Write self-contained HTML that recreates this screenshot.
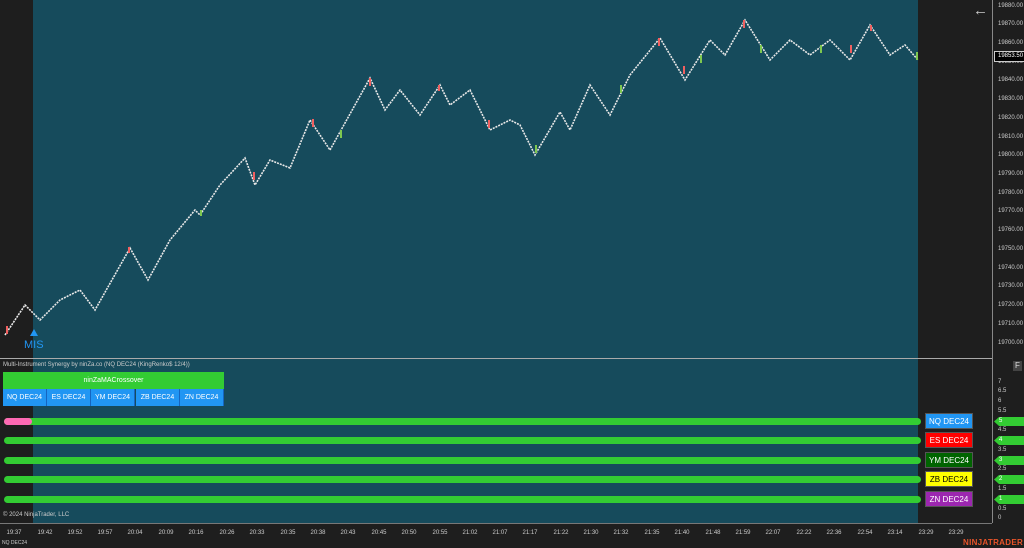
<!DOCTYPE html>
<html><head><meta charset="utf-8"><style>
body{margin:0;width:1024px;height:548px;background:#1e1e1e;position:relative;overflow:hidden;font-family:"Liberation Sans",sans-serif;color:#ddd}
.a{position:absolute}
.pl{position:absolute;left:998px;font-size:6px;color:#ccc}
.tl{position:absolute;top:530px;font-size:6px;color:#ccc;transform:translateX(-50%)}
.bar{position:absolute;left:4px;width:917px;height:7px;border-radius:4px;background:#33cc33}
.lbl{position:absolute;left:925px;width:48px;height:16px;font-size:8px;line-height:16px;text-align:center;border:1px solid #555;box-sizing:border-box}
.tag{position:absolute;left:994px;width:30px;height:9px;background:#33cc33;font-size:6px;line-height:9px;color:#fff;padding-left:5px;box-sizing:border-box;clip-path:polygon(5px 0,100% 0,100% 100%,5px 100%,0 50%)}
.btn{position:absolute;top:389px;height:17px;width:43px;background:#2196f3;color:#fff;font-size:7px;line-height:17px;text-align:center;border-right:1px solid #1565c0}
</style></head><body>
<div class="a" style="left:33px;top:0;width:885px;height:523px;background:#164b5c"></div>
<div class="a" style="left:992px;top:0;width:1px;height:523px;background:#888"></div>
<div class="a" style="left:0;top:358px;width:992px;height:1px;background:#aaa"></div>
<div class="a" style="left:0;top:523px;width:992px;height:1px;background:#777"></div>
<svg class="a" style="left:0;top:0" width="992" height="358">
<polyline fill="none" stroke="#e8e8e8" stroke-width="1.6" stroke-dasharray="2 1" points="5,335 25,305 40,320 60,300 80,290 95,310 130,248 148,280 170,240 195,210 200,215 220,185 245,158 255,185 270,160 290,168 310,120 330,150 370,78 385,110 400,90 420,115 440,85 450,105 470,90 490,130 510,120 520,125 535,155 560,112 570,130 590,85 600,100 610,115 630,75 660,38 685,80 710,40 725,55 745,20 770,60 790,40 810,55 830,40 850,60 870,25 890,55 905,45 918,60"/>
<g fill="#f06060"><rect x="6" y="326" width="2" height="8"/><rect x="128" y="247" width="2" height="6"/><rect x="253" y="172" width="2" height="8"/><rect x="312" y="119" width="2" height="8"/><rect x="369" y="78" width="2" height="8"/><rect x="438" y="85" width="2" height="6"/><rect x="488" y="120" width="2" height="8"/><rect x="658" y="38" width="2" height="8"/><rect x="683" y="66" width="2" height="8"/><rect x="743" y="20" width="2" height="8"/><rect x="850" y="45" width="2" height="8"/><rect x="870" y="25" width="2" height="6"/></g>
<g fill="#7ec850"><rect x="200" y="210" width="2" height="6"/><rect x="340" y="130" width="2" height="8"/><rect x="535" y="145" width="2" height="8"/><rect x="620" y="85" width="2" height="8"/><rect x="700" y="55" width="2" height="8"/><rect x="760" y="45" width="2" height="8"/><rect x="820" y="45" width="2" height="8"/><rect x="916" y="52" width="2" height="8"/></g>
<polygon points="34,329 30,336 38,336" fill="#2196f3"/>
</svg>
<div class="a" style="left:24px;top:339px;font-size:11px;color:#2196f3">MIS</div>
<div class="a" style="left:973px;top:2px;font-size:15px;color:#ccc">←</div>
<div class="pl" style="top:3px">19880.00</div><div class="pl" style="top:21px">19870.00</div><div class="pl" style="top:40px">19860.00</div>
<div class="pl" style="top:59px;">19850.00</div><div class="pl" style="top:77px">19840.00</div><div class="pl" style="top:96px">19830.00</div><div class="pl" style="top:115px">19820.00</div><div class="pl" style="top:134px">19810.00</div><div class="pl" style="top:152px">19800.00</div><div class="pl" style="top:171px">19790.00</div><div class="pl" style="top:190px">19780.00</div><div class="pl" style="top:208px">19770.00</div><div class="pl" style="top:227px">19760.00</div><div class="pl" style="top:246px">19750.00</div><div class="pl" style="top:265px">19740.00</div><div class="pl" style="top:283px">19730.00</div><div class="pl" style="top:302px">19720.00</div><div class="pl" style="top:321px">19710.00</div><div class="pl" style="top:340px">19700.00</div>
<div class="a" style="left:994px;top:51px;width:27px;height:9px;background:#000;border:1px solid #ccc;font-size:6px;line-height:9px;color:#fff;padding-left:3px">19853.50</div>
<div class="a" style="left:1013px;top:361px;width:9px;height:10px;background:#444;font-size:8px;text-align:center;line-height:10px">F</div>
<div class="pl" style="top:379px">7</div><div class="pl" style="top:388px">6.5</div><div class="pl" style="top:398px">6</div><div class="pl" style="top:408px">5.5</div><div class="pl" style="top:427px">4.5</div><div class="pl" style="top:447px">3.5</div><div class="pl" style="top:466px">2.5</div><div class="pl" style="top:486px">1.5</div><div class="pl" style="top:506px">0.5</div><div class="pl" style="top:515px">0</div>
<div class="a" style="left:3px;top:362px;font-size:6px;color:#ccc">Multi-Instrument Synergy by ninZa.co (NQ DEC24 (KingRenko$ 12/4))</div>
<div class="a" style="left:3px;top:372px;width:221px;height:17px;background:#33cc33;color:#fff;font-size:7px;line-height:17px;text-align:center">ninZaMACrossover</div>
<div class="btn" style="left:3px">NQ DEC24</div><div class="btn" style="left:47px">ES DEC24</div><div class="btn" style="left:91px">YM DEC24</div><div class="btn" style="left:136px">ZB DEC24</div><div class="btn" style="left:180px">ZN DEC24</div>
<div class="bar" style="top:418px"></div><div class="a" style="left:4px;top:418px;width:28px;height:7px;border-radius:4px;background:#ff69b4"></div>
<div class="bar" style="top:437px"></div><div class="bar" style="top:457px"></div><div class="bar" style="top:476px"></div><div class="bar" style="top:496px"></div>
<div class="lbl" style="top:413px;background:#2196f3;color:#fff">NQ DEC24</div>
<div class="lbl" style="top:432px;background:#ff0000;color:#fff">ES DEC24</div>
<div class="lbl" style="top:452px;background:#006400;color:#fff">YM DEC24</div>
<div class="lbl" style="top:471px;background:#ffff00;color:#000">ZB DEC24</div>
<div class="lbl" style="top:491px;background:#9c27b0;color:#fff">ZN DEC24</div>
<div class="tag" style="top:417px">5</div><div class="tag" style="top:436px">4</div><div class="tag" style="top:456px">3</div><div class="tag" style="top:475px">2</div><div class="tag" style="top:495px">1</div>
<div class="a" style="left:3px;top:512px;font-size:6px;color:#ccc">© 2024 NinjaTrader, LLC</div>
<div class="tl" style="left:14px">19:37</div><div class="tl" style="left:45px">19:42</div><div class="tl" style="left:75px">19:52</div><div class="tl" style="left:105px">19:57</div><div class="tl" style="left:135px">20:04</div><div class="tl" style="left:166px">20:09</div><div class="tl" style="left:196px">20:16</div><div class="tl" style="left:227px">20:26</div><div class="tl" style="left:257px">20:33</div><div class="tl" style="left:288px">20:35</div><div class="tl" style="left:318px">20:38</div><div class="tl" style="left:348px">20:43</div><div class="tl" style="left:379px">20:45</div><div class="tl" style="left:409px">20:50</div><div class="tl" style="left:440px">20:55</div><div class="tl" style="left:470px">21:02</div><div class="tl" style="left:500px">21:07</div><div class="tl" style="left:530px">21:17</div><div class="tl" style="left:561px">21:22</div><div class="tl" style="left:591px">21:30</div><div class="tl" style="left:621px">21:32</div><div class="tl" style="left:652px">21:35</div><div class="tl" style="left:682px">21:40</div><div class="tl" style="left:713px">21:48</div><div class="tl" style="left:743px">21:59</div><div class="tl" style="left:773px">22:07</div><div class="tl" style="left:804px">22:22</div><div class="tl" style="left:834px">22:36</div><div class="tl" style="left:865px">22:54</div><div class="tl" style="left:895px">23:14</div><div class="tl" style="left:926px">23:29</div><div class="tl" style="left:956px">23:29</div>
<div class="a" style="left:2px;top:540px;font-size:5px;color:#ccc">NQ DEC24</div>
<div class="a" style="left:963px;top:538px;font-size:8px;font-weight:bold;color:#e8542a;letter-spacing:0.3px">NINJATRADER</div>
</body></html>
